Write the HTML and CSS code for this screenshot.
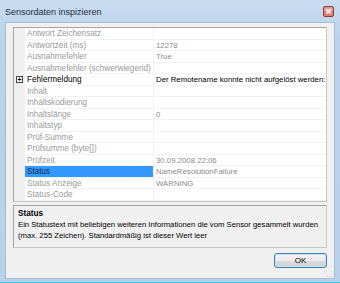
FILE: index.html
```html
<!DOCTYPE html>
<html lang="de">
<head>
  <meta charset="UTF-8">
  <title>Sensordaten inspizieren</title>
  <link rel="stylesheet" href="styles.css">
</head>
<body>
  <div class="window">
    <div class="titlebar">
      <span class="title">Sensordaten inspizieren</span>
      <svg class="close" width="11" height="11" viewBox="0 0 11 11">
        <rect x="0.5" y="0.5" width="10" height="10" rx="1.5" fill="#d9807a" stroke="#8e3b36"/>
        <rect x="1.5" y="1.5" width="8" height="4" fill="#e9aaa4"/>
        <path d="M3.5 3.5 L7.5 7.5 M7.5 3.5 L3.5 7.5" stroke="#fff" stroke-width="1.3"/>
      </svg>
    </div>

    <div class="client">
      <div class="grid">
        <div class="row"><div class="gutter"></div><div class="name">Antwort Zeichensatz</div><div class="value"></div></div>
        <div class="row"><div class="gutter"></div><div class="name">Antwortzeit (ms)</div><div class="value">12278</div></div>
        <div class="row"><div class="gutter"></div><div class="name">Ausnahmefehler</div><div class="value">True</div></div>
        <div class="row"><div class="gutter"></div><div class="name">Ausnahmefehler (schwerwiegend)</div><div class="value"></div></div>
        <div class="row active"><div class="gutter"><span class="plus">+</span></div><div class="name">Fehlermeldung</div><div class="value">Der Remotename konnte nicht aufgelöst werden:</div></div>
        <div class="row"><div class="gutter"></div><div class="name">Inhalt</div><div class="value"></div></div>
        <div class="row"><div class="gutter"></div><div class="name">Inhaltskodierung</div><div class="value"></div></div>
        <div class="row"><div class="gutter"></div><div class="name">Inhaltslänge</div><div class="value">0</div></div>
        <div class="row"><div class="gutter"></div><div class="name">Inhaltstyp</div><div class="value"></div></div>
        <div class="row"><div class="gutter"></div><div class="name">Prüf-Summe</div><div class="value"></div></div>
        <div class="row"><div class="gutter"></div><div class="name">Prüfsumme (byte[])</div><div class="value"></div></div>
        <div class="row"><div class="gutter"></div><div class="name">Prüfzeit</div><div class="value">30.09.2008 22:06</div></div>
        <div class="row selected"><div class="gutter"></div><div class="name">Status</div><div class="value">NameResolutionFailure</div></div>
        <div class="row"><div class="gutter"></div><div class="name">Status Anzeige</div><div class="value">WARNING</div></div>
        <div class="row"><div class="gutter"></div><div class="name">Status-Code</div><div class="value"></div></div>
      </div>

      <div class="desc">
        <div class="desc-title">Status</div>
        <div class="desc-text">Ein Statustext mit beliebigen weiteren Informationen die vom Sensor gesammelt wurden (max. 255 Zeichen). Standardmäßig ist dieser Wert leer</div>
      </div>

      <div class="buttons">
        <button class="ok">OK</button>
      </div>
      <div class="grip"></div>
    </div>
  </div>
</body>
</html>
```

FILE: styles.css
```css
* { box-sizing: border-box; }
body {
  margin: 0;
  width: 340px;
  height: 283px;
  overflow: hidden;
  font-family: "Liberation Sans", Arial, sans-serif;
  background: #bcd4ec;
}
.window {
  width: 340px;
  height: 283px;
  display: flex;
  flex-direction: column;
  background: linear-gradient(#c9dcf1, #bad2eb 40px, #b9d1ea);
  border-bottom: 1px solid #3fc0ea;
}
.titlebar {
  height: 22px;
  display: flex;
  align-items: center;
  justify-content: space-between;
  padding: 0 6px 0 5px;
}
.title {
  font-size: 9px;
  color: #1e2d3c;
  padding-top: 1px;
}
.close {
  display: block;
  margin-top: 1px;
}
.client {
  position: relative;
  flex: 1;
  margin: 0 5px 3px 5px;
  background: #f0f0f0;
  border: 1px solid #a7bcd4;
  padding: 4px 7px 0 7px;
  display: flex;
  flex-direction: column;
}
.grid {
  background: #fff;
  border: 1px solid #a5a5a5;
  border-right-color: #c8c8c8;
  border-bottom-color: #c8c8c8;
}
.row {
  display: grid;
  grid-template-columns: 11px 129px 1fr;
  height: 11.5px;
  font-size: 8.2px;
  line-height: 11.5px;
  color: #9a9a9a;
}
.gutter {
  background: #f0f0f0;
  display: flex;
  align-items: center;
  justify-content: center;
}
.name, .value {
  padding-left: 2px;
  white-space: nowrap;
  overflow: hidden;
  border-bottom: 1px solid #f2f2f2;
}
.name { border-right: 1px solid #f2f2f2; }
.value {
  color: #8a8a8a;
  font-size: 7.8px;
}
.active .name, .active .value { color: #000; }
.selected .name {
  background: #3399ff;
  color: #1a2a44;
}
.plus {
  width: 7px;
  height: 7px;
  border: 1px solid #444;
  background: #fff;
  font-size: 7px;
  line-height: 5px;
  text-align: center;
  color: #000;
  font-weight: bold;
}
.desc {
  margin-top: 3px;
  height: 43px;
  border: 1px solid #a5a5a5;
  border-right-color: #c8c8c8;
  border-bottom-color: #c8c8c8;
  padding: 2px 3px 2px 4px;
  font-size: 7.7px;
  line-height: 11px;
  color: #000;
}
.desc-title {
  font-weight: bold;
  font-size: 8.2px;
}
.buttons {
  display: flex;
  justify-content: flex-end;
  margin-top: 5px;
}
.ok {
  width: 53px;
  height: 15px;
  padding: 0;
  border: 1px solid #3c7fb1;
  border-radius: 3px;
  background: linear-gradient(#f4f4f4, #ebebeb 50%, #dddddd 51%, #cfcfcf);
  box-shadow: inset 0 0 0 1px #c6e6f8;
  font-family: "Liberation Sans", Arial, sans-serif;
  font-size: 8px;
  color: #000;
}
.grip {
  position: absolute;
  right: 1px;
  bottom: 1px;
  width: 7px;
  height: 7px;
  background: radial-gradient(circle, #b0b0b0 0.7px, transparent 0.8px) 0 0 / 2.5px 2.5px;
  clip-path: polygon(100% 0, 100% 100%, 0 100%);
}
```
